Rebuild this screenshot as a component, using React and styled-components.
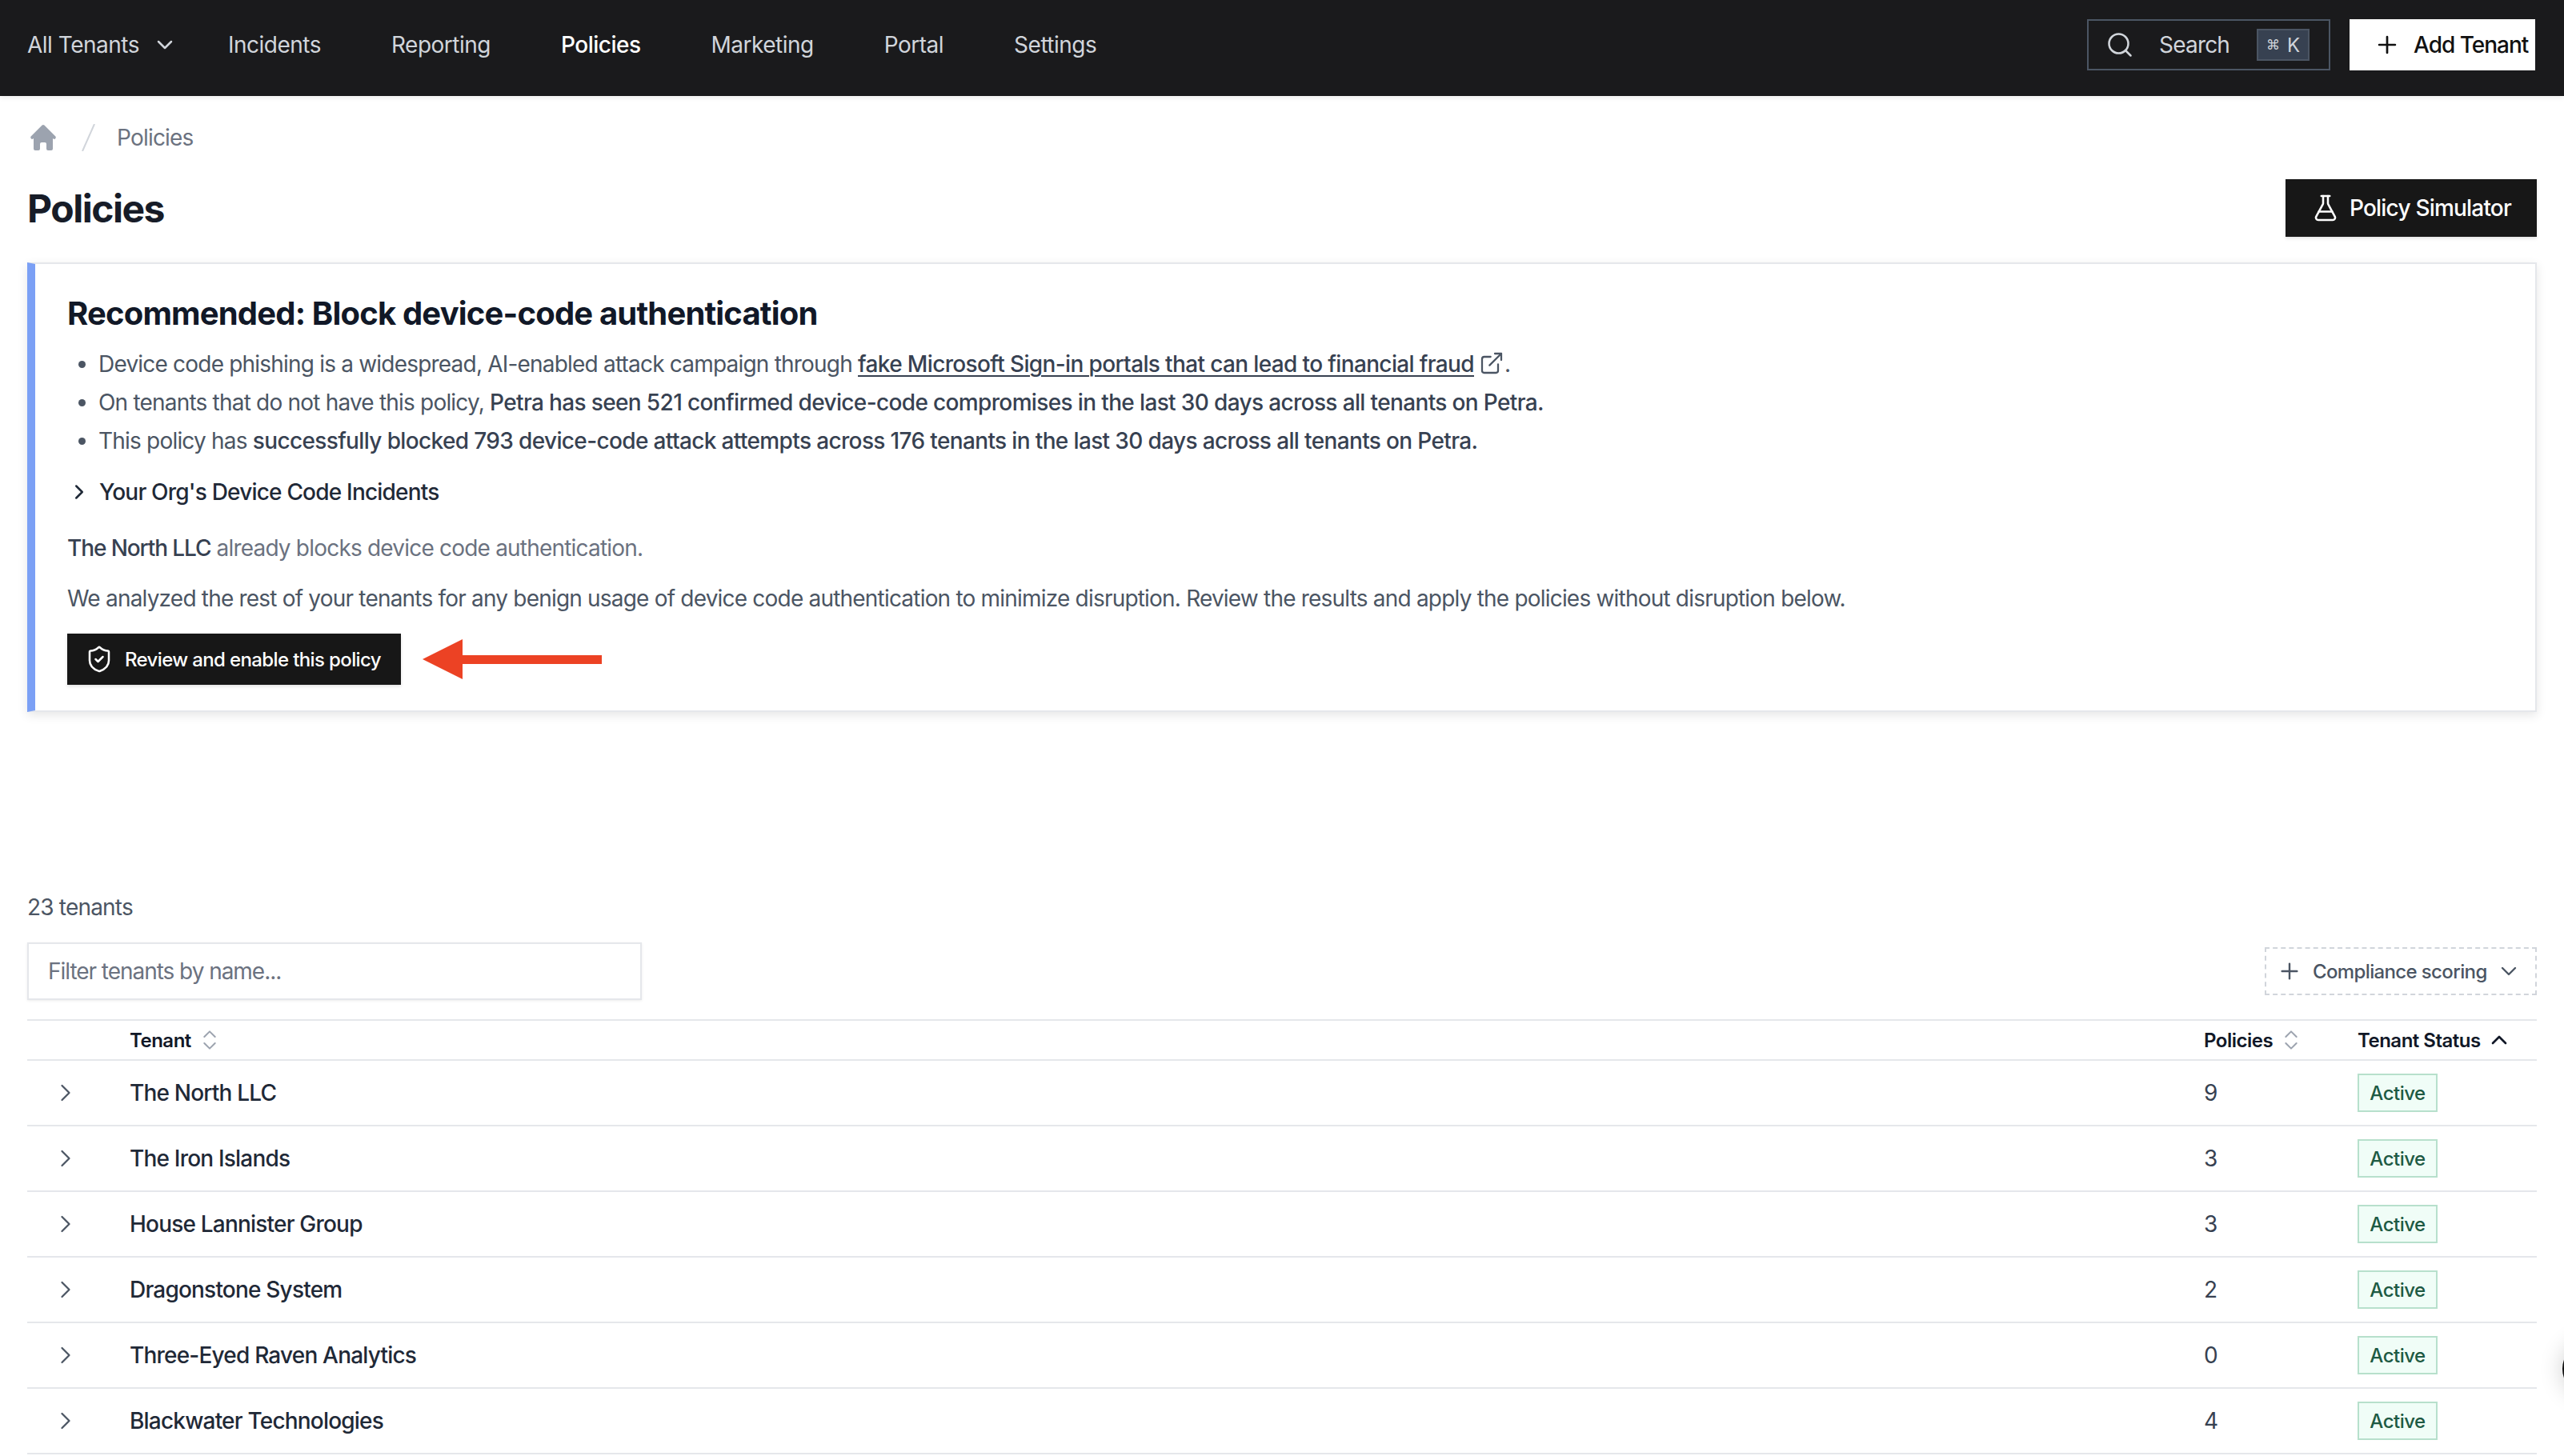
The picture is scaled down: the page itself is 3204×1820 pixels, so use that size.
import React from 'react';
import styled, { createGlobalStyle } from 'styled-components';
import { ChevronDown, ChevronRight, ChevronUp, ChevronsUpDown, ExternalLink, FlaskConical, Plus, Search } from 'lucide-react';

const GlobalStyle = createGlobalStyle`
  html, body {
    margin: 0;
    padding: 0;
    background: #fff;
    height: 1820px;
    overflow: hidden;
    font-family: Inter, "Liberation Sans", sans-serif;
    letter-spacing: -0.8px;
    -webkit-font-smoothing: antialiased;
  }
  * { box-sizing: border-box; }
`;

const Page = styled.div`
  width: 3204px;
  height: 1820px;
  overflow: hidden;
  position: relative;
`;

const TopBar = styled.header`
  height: 120px;
  background: #1a1a1c;
  display: flex;
  align-items: center;
  justify-content: space-between;
  padding: 0 36px 8px 34px;
  box-shadow: 0 2px 6px rgba(0, 0, 0, 0.08);
`;

const NavList = styled.nav`
  display: flex;
  align-items: center;
  gap: 88px;
`;

const NavItem = styled.span`
  display: flex;
  align-items: center;
  gap: 16px;
  font-size: 28px;
  letter-spacing: -0.5px;
  color: ${({ $active }) => ($active ? '#ffffff' : '#d1d5db')};
  font-weight: ${({ $active }) => ($active ? 500 : 400)};
`;

const TenantPicker = styled(NavItem)`
  margin-right: -25px;
`;

const NavRight = styled.div`
  display: flex;
  align-items: center;
  gap: 24px;
`;

const SearchBox = styled.div`
  width: 304px;
  height: 64px;
  border: 2px solid #4b5563;
  display: flex;
  align-items: center;
  padding: 0 24px 0 21px;
  color: #d1d5db;
  font-size: 28px;
`;

const SearchLabel = styled.span`
  margin-left: 31px;
  flex: 1;
`;

const Kbd = styled.span`
  width: 66px;
  height: 40px;
  background: #374151;
  border: 2px solid #4b5563;
  display: flex;
  align-items: center;
  justify-content: center;
  gap: 9px;
  font-size: 24px;
  letter-spacing: 0;
  color: #d1d5db;
`;

const CmdGlyph = styled.span`
  font-size: 17px;
  font-family: "DejaVu Sans", sans-serif;
`;

const WhiteButton = styled.button`
  width: 232px;
  height: 64px;
  background: #fff;
  border: none;
  display: flex;
  align-items: center;
  gap: 16px;
  font: inherit;
  font-size: 28px;
  font-weight: 500;
  letter-spacing: -1px;
  color: #111;
  padding: 0 0 0 30px;
`;

const Content = styled.main`
  padding: 0 34px;
`;

const Crumbs = styled.div`
  height: 68px;
  margin-top: 18px;
  display: flex;
  align-items: center;
  gap: 28px;
  font-size: 28px;
  color: #6b7280;
`;

const HomeIcon = styled.svg`
  width: 40px;
  height: 40px;
  fill: #9ca3af;
`;

const CrumbSlash = styled.svg`
  width: 17px;
  height: 34px;
  margin-right: -1px;
  stroke: #d1d5db;
  stroke-width: 2;
`;

const TitleRow = styled.div`
  height: 72px;
  margin-top: 18px;
  display: flex;
  align-items: center;
  justify-content: space-between;
`;

const Title = styled.h1`
  margin: 0;
  font-size: 48px;
  font-weight: 700;
  letter-spacing: -1.5px;
  color: #171c28;
`;

const DarkButton = styled.button`
  height: ${({ $small }) => ($small ? '64px' : '72px')};
  background: #171717;
  color: #fff;
  border: none;
  display: flex;
  align-items: center;
  gap: ${({ $small }) => ($small ? '14px' : '12px')};
  padding: 0 ${({ $small }) => ($small ? '25px' : '32px')} 0 ${({ $small }) => ($small ? '22px' : '32px')};
  font: inherit;
  font-size: ${({ $small }) => ($small ? '24px' : '28px')};
  font-weight: 500;
  letter-spacing: ${({ $small }) => ($small ? '-0.63px' : '-0.8px')};
  box-shadow: 0 2px 4px rgba(0, 0, 0, 0.12);
`;

const Card = styled.section`
  margin-top: 32px;
  height: 562px;
  border: 2px solid #e5e7eb;
  border-left: 10px solid #7ba0f5;
  padding: 38px 40px 0 40px;
  box-shadow: 0 4px 12px rgba(0, 0, 0, 0.1);
`;

const CardTitle = styled.h2`
  margin: 0 0 15px;
  font-size: 40px;
  line-height: 48px;
  font-weight: 700;
  letter-spacing: -0.82px;
  color: #111827;
`;

const BulletList = styled.ul`
  margin: 0;
  padding: 0 0 0 39px;
  font-size: 28px;
  line-height: 48px;
  color: #4b5563;
`;

const Strong = styled.span`
  font-weight: 500;
  letter-spacing: -0.64px;
  color: #374151;
`;

const TenantRef = styled(Strong)`
  letter-spacing: -1.1px;
`;

const SourceLink = styled.a`
  color: #374151;
  font-weight: 500;
  letter-spacing: -0.64px;
  text-decoration: underline;
  text-decoration-thickness: 2px;
  text-underline-offset: 4px;
`;

const LinkIcon = styled(ExternalLink)`
  margin-left: 6px;
  vertical-align: -5px;
  color: #4b5563;
`;

const Disclosure = styled.div`
  margin-top: 16px;
  height: 48px;
  display: flex;
  align-items: center;
  gap: 10px;
  font-size: 28px;
  font-weight: 500;
  color: #1f2937;
`;

const Paragraph = styled.p`
  margin: ${({ $gap }) => $gap}px 0 0;
  font-size: 28px;
  line-height: 48px;
  color: ${({ $muted }) => ($muted ? '#6b7280' : '#4b5563')};
`;

const ActionRow = styled.div`
  margin-top: 20px;
  display: flex;
  align-items: center;
  gap: 27px;
`;

const TableHead = styled.div`
  margin-top: 224px;
  font-size: 28px;
  line-height: 40px;
  color: #4b5563;
`;

const FilterRow = styled.div`
  margin-top: 24px;
  display: flex;
  align-items: center;
  justify-content: space-between;
`;

const FilterInput = styled.input`
  width: 768px;
  height: 72px;
  border: 2px solid #e5e7eb;
  padding: 0 24px;
  font: inherit;
  font-size: 28px;
  letter-spacing: -1.04px;
  box-shadow: 0 1px 3px rgba(0, 0, 0, 0.08);
  &::placeholder { color: #6b7280; }
`;

const ScoreButton = styled.button`
  width: 340px;
  height: 60px;
  background: #fff;
  border: 2px dashed #d1d5db;
  display: flex;
  align-items: center;
  padding: 0 17px 0 13px;
  font: inherit;
  font-size: 24px;
  font-weight: 500;
  letter-spacing: -0.63px;
  color: #4b5563;
`;

const ScoreLabel = styled.span`
  flex: 1;
  margin-left: 13px;
  text-align: left;
`;

const Grid = styled.div`
  margin-top: 24px;
  border-top: 2px solid #e5e7eb;
`;

const HeadRow = styled.div`
  height: 50px;
  display: grid;
  grid-template-columns: 128px 1fr 192px 224px;
  align-items: center;
  border-bottom: 2px solid #e5e7eb;
  font-size: 24px;
  font-weight: 600;
  letter-spacing: -0.5px;
  color: #111827;
`;

const HeadCell = styled.div`
  grid-column: ${({ $col }) => $col};
  display: flex;
  align-items: center;
  gap: 7px;
`;

const SortIcon = styled(ChevronsUpDown)`
  color: #9ca3af;
`;

const Row = styled.div`
  height: 82px;
  display: grid;
  grid-template-columns: 128px 1fr 192px 224px;
  align-items: center;
  border-bottom: 2px solid #e5e7eb;
  font-size: 28px;
`;

const Expand = styled.div`
  padding-left: 30px;
  display: flex;
  color: #4b5563;
`;

const TenantName = styled.div`
  color: #1f2937;
  font-weight: 500;
`;

const Count = styled.div`
  color: #374151;
`;

const Badge = styled.span`
  width: 100px;
  height: 48px;
  background: #f0fdf7;
  border: 2px solid #b7e0cc;
  display: flex;
  align-items: center;
  justify-content: center;
  font-size: 24px;
  font-weight: 500;
  letter-spacing: -0.5px;
  color: #1d5a43;
`;

const ChatBubble = styled.div`
  position: absolute;
  right: -66px;
  top: 1677px;
  width: 68px;
  height: 68px;
  border-radius: 50%;
  background: #111;
  box-shadow: 0 0 30px rgba(0, 0, 0, 0.2);
`;

const navItems = ['Incidents', 'Reporting', 'Policies', 'Marketing', 'Portal', 'Settings'];

const tenants = [
  { name: 'The North LLC', policies: 9 },
  { name: 'The Iron Islands', policies: 3 },
  { name: 'House Lannister Group', policies: 3 },
  { name: 'Dragonstone System', policies: 2 },
  { name: 'Three-Eyed Raven Analytics', policies: 0 },
  { name: 'Blackwater Technologies', policies: 4 },
];

const App = () => (
  <Page>
    <GlobalStyle />
    <TopBar>
      <NavList>
        <TenantPicker>
          All Tenants
          <ChevronDown size={32} strokeWidth={1.9} />
        </TenantPicker>
        {navItems.map((item) => (
          <NavItem key={item} $active={item === 'Policies'}>{item}</NavItem>
        ))}
      </NavList>
      <NavRight>
        <SearchBox>
          <Search size={36} strokeWidth={1.7} />
          <SearchLabel>Search</SearchLabel>
          <Kbd><CmdGlyph>⌘</CmdGlyph>K</Kbd>
        </SearchBox>
        <WhiteButton>
          <Plus size={34} strokeWidth={1.9} />
          Add Tenant
        </WhiteButton>
      </NavRight>
    </TopBar>
    <Content>
      <Crumbs>
        <HomeIcon viewBox="0 0 20 20">
          <path d="M10.7 2.3a1 1 0 0 0-1.4 0l-7 7a1 1 0 0 0 1.4 1.4l.3-.3V17a1 1 0 0 0 1 1h2a1 1 0 0 0 1-1v-3a1 1 0 0 1 1-1h2a1 1 0 0 1 1 1v3a1 1 0 0 0 1 1h2a1 1 0 0 0 1-1v-6.6l.3.3a1 1 0 0 0 1.4-1.4l-7-7z" />
        </HomeIcon>
        <CrumbSlash viewBox="0 0 17 34"><line x1="16" y1="0" x2="1" y2="34" /></CrumbSlash>
        Policies
      </Crumbs>
      <TitleRow>
        <Title>Policies</Title>
        <DarkButton>
          <FlaskConical size={36} strokeWidth={1.7} />
          Policy Simulator
        </DarkButton>
      </TitleRow>
      <Card>
        <CardTitle>Recommended: Block device-code authentication</CardTitle>
        <BulletList>
          <li>
            Device code phishing is a widespread, AI-enabled attack campaign through{' '}
            <SourceLink>fake Microsoft Sign-in portals that can lead to financial fraud</SourceLink>
            <LinkIcon size={32} strokeWidth={1.7} />.
          </li>
          <li>
            On tenants that do not have this policy,{' '}
            <Strong>Petra has seen 521 confirmed device-code compromises in the last 30 days across all tenants on Petra.</Strong>
          </li>
          <li>
            This policy has{' '}
            <Strong>successfully blocked 793 device-code attack attempts across 176 tenants in the last 30 days across all tenants on Petra.</Strong>
          </li>
        </BulletList>
        <Disclosure>
          <ChevronRight size={30} strokeWidth={2} />
          Your Org's Device Code Incidents
        </Disclosure>
        <Paragraph $muted $gap={22}>
          <TenantRef>The North LLC</TenantRef> already blocks device code authentication.
        </Paragraph>
        <Paragraph $gap={15}>
          We analyzed the rest of your tenants for any benign usage of device code authentication to minimize disruption. Review the results and apply the policies without disruption below.
        </Paragraph>
        <ActionRow>
          <DarkButton $small>
            <svg width="36" height="36" viewBox="0 0 24 24" fill="none" stroke="currentColor" strokeWidth="1.7" strokeLinecap="round" strokeLinejoin="round">
              <path d="M20 13c0 5-3.5 7.5-7.66 8.95a1 1 0 0 1-.67-.01C7.5 20.5 4 18 4 13V6a1 1 0 0 1 1-1c2 0 4.5-1.2 6.24-2.72a1.17 1.17 0 0 1 1.52 0C14.51 3.81 17 5 19 5a1 1 0 0 1 1 1z" />
              <path d="m9 12 2 2 4-4" />
            </svg>
            Review and enable this policy
          </DarkButton>
          <svg width="224" height="50" viewBox="0 0 224 50">
            <path d="M0 25 L50 0 V20 H224 V31 H50 V50 Z" fill="#ec4224" />
          </svg>
        </ActionRow>
      </Card>
      <TableHead>23 tenants</TableHead>
      <FilterRow>
        <FilterInput placeholder="Filter tenants by name..." />
        <ScoreButton>
          <Plus size={32} strokeWidth={1.8} />
          <ScoreLabel>Compliance scoring</ScoreLabel>
          <ChevronDown size={32} strokeWidth={1.8} />
        </ScoreButton>
      </FilterRow>
      <Grid>
        <HeadRow>
          <HeadCell $col={2}>Tenant <SortIcon size={32} strokeWidth={1.5} /></HeadCell>
          <HeadCell $col={3}>Policies <SortIcon size={32} strokeWidth={1.5} /></HeadCell>
          <HeadCell $col={4}>Tenant Status <ChevronUp size={32} strokeWidth={2} /></HeadCell>
        </HeadRow>
        {tenants.map((tenant) => (
          <Row key={tenant.name}>
            <Expand><ChevronRight size={36} strokeWidth={1.5} /></Expand>
            <TenantName>{tenant.name}</TenantName>
            <Count>{tenant.policies}</Count>
            <div><Badge>Active</Badge></div>
          </Row>
        ))}
      </Grid>
    </Content>
    <ChatBubble />
  </Page>
);

export default App;
